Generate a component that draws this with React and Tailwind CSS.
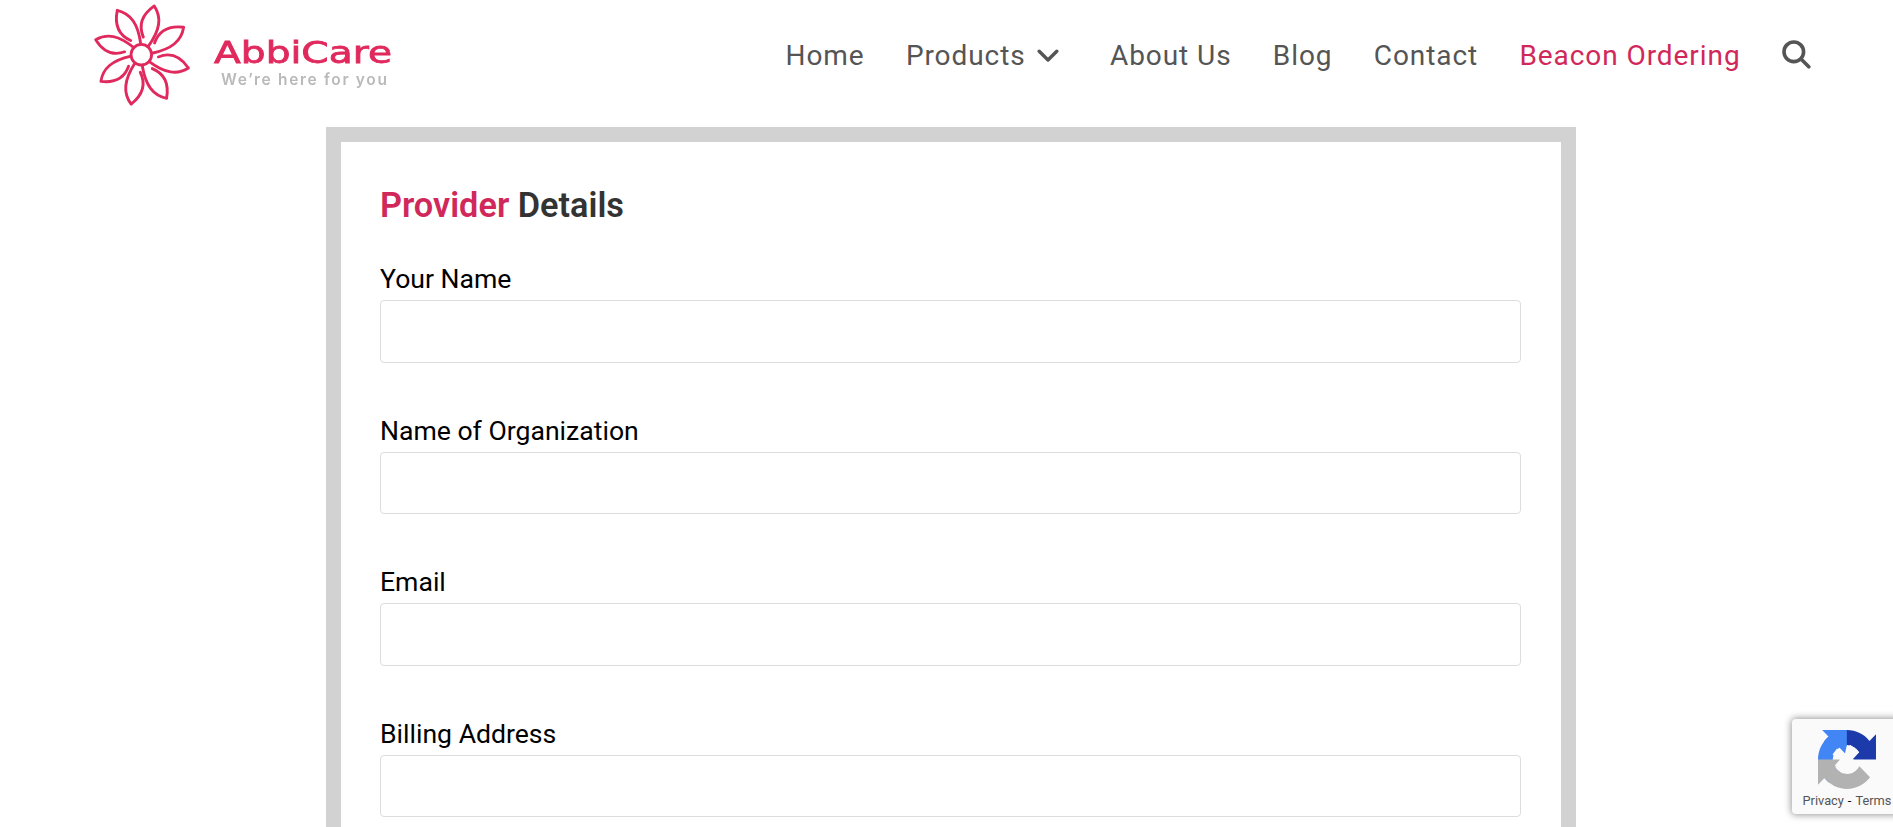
const petals = [
  [14.9, 1.03],
  [57, 1.03],
  [105.8, 1],
  [149.9, 1.03],
  [191.6, 1.03],
  [236.5, 0.99],
  [288.2, 0.98],
  [331.6, 1.03],
];

function Logo() {
  return (
    <svg width="330" height="112" viewBox="80 0 330 112" className="shrink-0 blur-[0.5px]">
      <g transform="translate(141.3 54.7)" fill="none" stroke="#e0295c" strokeWidth="2.8" strokeLinecap="round" strokeLinejoin="round">
        <circle r="10.3" />
        {petals.map(([a, s]) => (
          <path key={a} transform={`rotate(${a}) scale(${s})`} d="M-2.5 -17C-9.5 -26 -10 -37 0 -49C10 -40 11.5 -28 4.5 -9.5" />
        ))}
      </g>
      <text x="214" y="63" textLength="178" lengthAdjust="spacingAndGlyphs" fontFamily="DejaVu Sans, sans-serif" fontSize="31" fill="#e0295c" stroke="#e0295c" strokeWidth="0.8">AbbiCare</text>
      <text x="221" y="85.3" textLength="166" lengthAdjust="spacing" fontFamily="Inter, sans-serif" fontSize="15.5" fontWeight="600" fill="#b9b9b9">We’re here for you</text>
    </svg>
  );
}

function Nav() {
  return (
    <nav className="ml-[375.5px] flex h-[112px] items-center gap-[41.3px] whitespace-nowrap text-[28px] leading-[40px] tracking-[0.93px] text-[#555]">
      <a>Home</a>
      <a className="flex items-center">
        Products
        <svg width="22" height="14" viewBox="0 0 22 14" className="ml-[11.5px] mr-[9.5px]" fill="none" stroke="#555" strokeWidth="3.4" strokeLinecap="round" strokeLinejoin="round">
          <path d="M2.2 2.2L11 11L19.8 2.2" />
        </svg>
      </a>
      <a>About Us</a>
      <a>Blog</a>
      <a>Contact</a>
      <a className="text-[#d0285a]">Beacon Ordering</a>
      <svg width="29" height="29" viewBox="0 0 29 29" className="-mt-[3px]" fill="none" stroke="#555" strokeWidth="3.6" strokeLinecap="round">
        <circle cx="11.8" cy="11.8" r="9.8" />
        <path d="M19 19L26.8 26.8" />
      </svg>
    </nav>
  );
}

function Field({ label }) {
  return (
    <label className="flex h-[151.5px] flex-col">
      <span className="h-[42px] pt-px text-[26.6px] leading-[40px] text-black">{label}</span>
      <input className="h-[62.5px] w-full rounded-[4px] border border-[#ddd] bg-white" />
    </label>
  );
}

function Recaptcha() {
  return (
    <div className="absolute left-[1792px] top-[719px] flex h-[95px] w-[110px] flex-col rounded-[4px] bg-[#fafafa] pl-[10.5px] pt-[11px] shadow-[0_0_7px_1px_#999]">
      <svg width="58" height="59" viewBox="0 0 64 64" className="ml-[15px]" preserveAspectRatio="none">
        <path fill="#1c3aa9" d="M64 31.955l-.033-1.37V4.687l-7.16 7.16C50.948 4.674 42.033.093 32.05.093c-10.4 0-19.622 4.96-25.458 12.64l11.736 11.86a15.55 15.55 0 0 1 4.754-5.334c2.05-1.6 4.952-2.906 8.968-2.906.485 0 .86.057 1.135.163 4.976.393 9.288 3.14 11.828 7.124l-8.307 8.307L64 31.953" />
        <path fill="#4285f4" d="M31.862.094l-1.37.033H4.594l7.16 7.16C4.58 13.147 0 22.06 0 32.046c0 10.4 4.96 19.622 12.64 25.458L24.5 45.768a15.55 15.55 0 0 1-5.334-4.754c-1.6-2.05-2.906-4.952-2.906-8.968 0-.485.057-.86.163-1.135.393-4.976 3.14-9.288 7.124-11.828l8.307 8.307L31.86.095" />
        <path fill="#b2b2b2" d="M.001 32.045l.033 1.37v25.898l7.16-7.16c5.86 7.173 14.774 11.754 24.76 11.754 10.4 0 19.622-4.96 25.458-12.64l-11.736-11.86a15.55 15.55 0 0 1-4.754 5.334c-2.05 1.6-4.952 2.906-8.968 2.906-.485 0-.86-.057-1.135-.163-4.976-.393-9.288-3.14-11.828-7.124l8.307-8.307c-10.522.04-22.4.066-27.295-.005" />
        <path fill="#fafafa" d="M16 26.5L21 20L29.5 26.5L31.5 18L36 16.3L45.5 24L38.6 31.5L46 38L32 47.8L18.5 38.5L24.3 32Z" />
      </svg>
      <div className="mt-[3px] whitespace-pre text-[12.8px] leading-[18px] text-[#555]">Privacy<span className="px-[4px] text-black">-</span>Terms</div>
    </div>
  );
}

export default function App() {
  return (
    <div className="relative h-[827px] w-[1893px] overflow-hidden bg-white font-['Roboto',sans-serif]">
      <header className="flex h-[127px] items-start pl-[80px]">
        <Logo />
        <Nav />
      </header>
      <main className="ml-[326px] h-[760px] w-[1250px] border-[15px] border-[#d2d2d2] pl-[39px] pr-[40px] pt-[39px]">
        <h2 className="h-[77px] text-[34.3px] font-semibold leading-[48px] text-[#333]">
          <span className="text-[#d0285a]">Provider</span> Details
        </h2>
        <form>
          <Field label="Your Name" />
          <Field label="Name of Organization" />
          <Field label="Email" />
          <Field label="Billing Address" />
        </form>
      </main>
      <Recaptcha />
    </div>
  );
}
